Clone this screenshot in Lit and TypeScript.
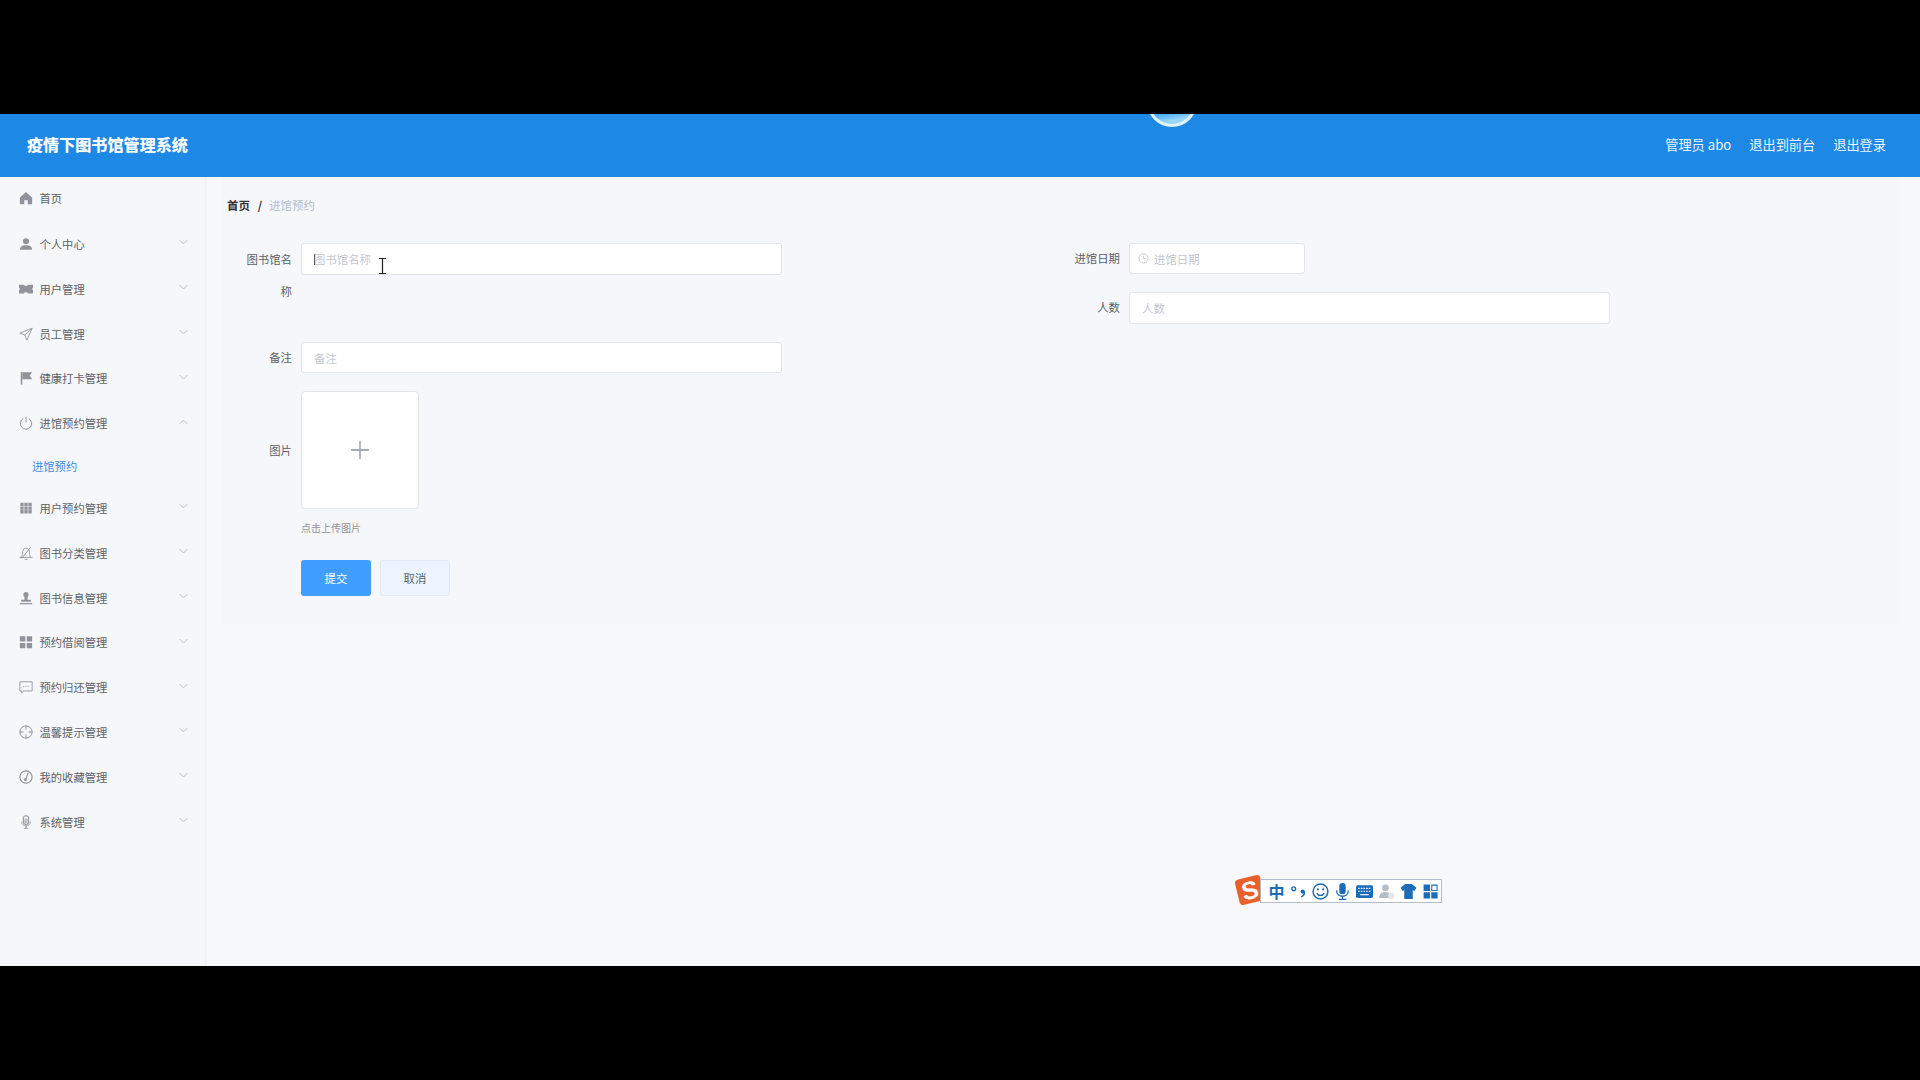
import { LitElement, html, css, svg } from "lit";
import { customElement } from "lit/decorators.js";

const icons: Record<string, unknown> = {
  home: svg`<path d="M8 1 1 7.500V15h5v-4.500h4V15h5V7.500z" fill="currentColor"/>`,
  user: svg`<circle cx="8" cy="4.800" r="3.500" fill="currentColor"/><path d="M1 14.500c0-3.800 2.800-5.200 7-5.200s7 1.400 7 5.200z" fill="currentColor"/>`,
  ticket: svg`<path d="M0 3h5.500l1 1.300h3l1-1.300H16v3.500L14.800 8 16 9.500V13h-5.500l-1-1.300h-3l-1 1.300H0V9.500L1.200 8 0 6.500z" fill="currentColor"/>`,
  send: svg`<path d="M15 1.500 1 7l5.800 2.200L9 15zM6.800 9.200 15 1.500" fill="none" stroke="currentColor" stroke-width="1"/>`,
  flag: svg`<path d="M2 1h1.800v14.500H2z" fill="currentColor"/><path d="M3.800 1.500H15l-2.700 4 2.700 4H3.800z" fill="currentColor"/>`,
  power: svg`<path d="M5 2.800a6.500 6.500 0 1 0 6 0M8 .8v6.500" fill="none" stroke="currentColor" stroke-width="1.100"/>`,
  grid: svg`<path d="M1.500 2h3.800v3.800H1.500zM6.100 2h3.800v3.800H6.100zM10.700 2h3.800v3.800h-3.800zM1.500 6.200h3.800V10H1.500zM6.100 6.200h3.800V10H6.100zM10.700 6.200h3.800V10h-3.800zM1.500 10.400h3.800v3.800H1.500zM6.100 10.400h3.800v3.800H6.100zM10.700 10.400h3.800v3.800h-3.800z" fill="currentColor"/>`,
  belloff: svg`<path d="M.5 13h15M3 13c1-2 1-4 1.300-6.500C4.600 4.100 6.300 2.300 8 2.300s3.400 1.500 3.800 3.700c.4 2.500.2 5 1.200 7M6.500 15.200h3M3 14.500 13.500 1" fill="none" stroke="currentColor" stroke-width="1"/>`,
  stamp: svg`<circle cx="8" cy="4" r="3" fill="currentColor"/><path d="M6.300 6h3.400v4.200H6.300zM2.500 10h11v2.300h-11zM1 13.800h14v1.200H1z" fill="currentColor"/>`,
  menu: svg`<path d="M1 1.500h6.200v6H1zM8.800 1.500H15v6H8.800zM1 9h6.200v6H1zM8.800 9H15v6H8.800z" fill="currentColor"/>`,
  chat: svg`<path d="M1 2h14v10.500H5.500L3 14.800v-2.300H1z" fill="none" stroke="currentColor" stroke-width="1"/><path d="M4.800 7.300h1.200M7.400 7.300h1.200M10 7.300h1.200" stroke="currentColor" stroke-width="1"/>`,
  aim: svg`<circle cx="8" cy="8" r="7" fill="none" stroke="currentColor" stroke-width="1.100"/><path d="M8 .8v4.400M8 10.800v4.400M.8 8h4.400M10.800 8h4.400" stroke="currentColor" stroke-width="1.100"/>`,
  gauge: svg`<circle cx="8" cy="8" r="7" fill="none" stroke="currentColor" stroke-width="1.300"/><path d="m10.500 3-2.800 8" stroke="currentColor" stroke-width="1.300"/><circle cx="7.300" cy="11" r="1.700" fill="currentColor"/>`,
  mic: svg`<rect x="5" y=".8" width="6" height="10" rx="3" fill="none" stroke="currentColor" stroke-width="1.200"/><rect x="6.200" y="4" width="3.600" height="5.500" rx="1.500" fill="currentColor" opacity=".6"/><path d="M3 7.500c0 3.200 2.200 5 5 5s5-1.800 5-5M8 12.500v2.700M5.500 15.300h5" fill="none" stroke="currentColor" stroke-width="1"/>`,
};

const menu = [
  { label: "首页", icon: "home", first: true, plain: true },
  { label: "个人中心", icon: "user" },
  { label: "用户管理", icon: "ticket" },
  { label: "员工管理", icon: "send" },
  { label: "健康打卡管理", icon: "flag" },
  { label: "进馆预约管理", icon: "power", open: true, sub: "进馆预约" },
  { label: "用户预约管理", icon: "grid" },
  { label: "图书分类管理", icon: "belloff" },
  { label: "图书信息管理", icon: "stamp" },
  { label: "预约借阅管理", icon: "menu" },
  { label: "预约归还管理", icon: "chat" },
  { label: "温馨提示管理", icon: "aim" },
  { label: "我的收藏管理", icon: "gauge" },
  { label: "系统管理", icon: "mic" },
];

@customElement("app-root")
export class AppRoot extends LitElement {
  static styles = css`
    :host {
      display: block;
      height: 1080px;
      background: #000;
      font-family: "Noto Sans CJK SC", "Liberation Sans", sans-serif;
      font-size: 11.4px;
      color: #606266;
      overflow: hidden;
    }
    .screen { display: flex; flex-direction: column; box-sizing: border-box; padding-top: 114px; height: 966px; position: relative; }
    .header {
      height: 63px; flex: none; box-sizing: border-box; background: #1e88e5; color: #fff;
      display: flex; align-items: center; justify-content: space-between;
      padding: 0 34px 0 27px; position: relative; overflow: hidden;
    }
    .title { font-size: 16.1px; font-weight: 700; padding-bottom: 4px; text-shadow: 0 0 1px rgba(255,255,255,.5); }
    .links { display: flex; gap: 18px; font-size: 13.2px; color: #eaf4fd; padding-bottom: 2px; }
    .orb {
      position: absolute; left: 1147px; top: -37px; width: 50px; height: 50px;
      box-sizing: border-box; border-radius: 50%; border: 3px solid #dff1fc;
      background: linear-gradient(170deg, #4fb0f5 72%, #9ad6f9 86%);
    }
    .body { flex: 1; display: flex; min-height: 0; background: #f7f8fa; }
    .side { width: 207px; flex: none; background: #f5f7fb; box-shadow: inset -6px 0 5px -5px rgba(0,0,0,.035); font-size: 11.3px; }
    .row { height: 44.8px; display: flex; align-items: center; padding: 0 0 2px 19px; box-sizing: border-box; }
    .row.first { height: 45.6px; padding-bottom: 3px; }
    .ico { width: 14px; height: 14px; color: #909399; flex: none; margin-right: 7px; margin-left: -0.5px; }
    .chev { width: 9px; height: 6px; margin-left: auto; margin-right: 19px; margin-bottom: 3px; color: #b9bdc6; }
    .sub { height: 40px; display: flex; align-items: center; padding: 0 0 2px 32px; box-sizing: border-box; color: #3a8ee6; }
    .main { flex: 1; padding: 0 20px 0 15px; min-width: 0; }
    .card { height: 446px; background: #f6f7fa; }
    .crumb { height: 50px; padding: 5px 0 0 5px; display: flex; align-items: center; color: #b2bdca; box-sizing: border-box; }
    .crumb b { color: #303133; font-weight: 700; }
    .crumb i { color: #303133; font-style: normal; font-weight: 700; margin: 0 7px 0 8px; }
    .form {
      display: grid; grid-template-columns: 828px 828px; grid-template-rows: 31px 32px 31px;
      row-gap: 18px; margin-top: 16px; position: relative;
    }
    .item { display: flex; gap: 9px; align-items: flex-start; }
    .name { grid-row: 1 / span 2; }
    .date { grid-column: 2; grid-row: 1; }
    .count { grid-column: 2; grid-row: 2; }
    .note { grid-column: 1; grid-row: 3; }
    .label { width: 70px; padding-left: 22px; box-sizing: border-box; flex: none; text-align: right; line-height: 31px; color: #606266; }
    .name .label { line-height: 32px; margin-top: -0.5px; }
    .field {
      width: 481px; height: 100%; max-height: 32px; box-sizing: border-box; background: #fff;
      border: 1px solid #e2e4ea; border-radius: 3px; display: flex; align-items: center; padding: 0 12px;
    }
    .name .field { height: 32px; }
    .field.short { width: 176px; padding-left: 8px; gap: 5px; }
    .field input {
      border: 0; outline: 0; padding: 0; background: none; width: 100%; font: inherit; color: #606266;
    }
    .field input::placeholder { color: #c3c6ce; opacity: 1; }
    .clock { width: 11px; height: 11px; flex: none; color: #c3c6ce; }
    .upload-row { display: flex; gap: 9px; margin-top: 18px; align-items: center; }
    .upload {
      width: 118px; height: 118px; box-sizing: border-box; background: #fff; border: 1px solid #e2e4ea;
      border-radius: 4px; display: flex; align-items: center; justify-content: center; color: #8c939d;
    }
    .upload svg { width: 20px; height: 20px; }
    .hint { margin: 11px 0 0 79px; font-size: 10px; line-height: 16px; color: #8f949c; }
    .buttons { display: flex; gap: 9px; margin: 24px 0 0 79px; }
    .btn { width: 70px; height: 36px; box-sizing: border-box; border-radius: 3px; padding-bottom: 1px; display: flex; align-items: center; justify-content: center; }
    .primary { background: #409eff; color: #fff; }
    .ghost { background: #ecf5ff; border: 1px solid #e3e8f0; color: #606266; }
    .caret { position: absolute; left: 92px; top: 11px; width: 1px; height: 11px; background: #606266; }
    .ibeam { position: absolute; left: 156px; top: 15px; width: 9px; height: 16px; color: #222; }
    .ime {
      position: absolute; left: 1260px; top: 879px; width: 182px; height: 24px; box-sizing: border-box;
      background: #fff; border: 1px solid #b4bccc; display: flex; align-items: center;
      padding-left: 7px; gap: 5px; color: #1b6cb8;
    }
    .ime .ch { font-size: 16px; font-weight: 700; width: 17px; text-align: center; line-height: 22px; }
    .ime svg { width: 17px; height: 17px; flex: none; }
    .logo {
      position: absolute; left: 1237px; top: 877px; width: 26px; height: 26px; border-radius: 4px;
      background: #e8602c; color: #fff; font: 700 25px/26px "Liberation Sans", sans-serif; text-align: center;
      transform: rotate(-14deg);
    }
  `;

  private icon(name: string) {
    return html`<svg class="ico" viewBox="0 0 16 16">${icons[name]}</svg>`;
  }

  private row(m: (typeof menu)[number]) {
    return html`
      <div class="row ${m.first ? "first" : ""}">
        ${this.icon(m.icon)}<span>${m.label}</span>
        ${m.plain
          ? ""
          : html`<svg class="chev" viewBox="0 0 9 6"><path d=${m.open ? "M.5 5 4.500 1l4 4" : "M.5 1l4 4 4-4"} fill="none" stroke="currentColor" stroke-width=".9"/></svg>`}
      </div>
      ${m.sub ? html`<div class="sub">${m.sub}</div>` : ""}
    `;
  }

  render() {
    return html`
      <div class="screen">
        <header class="header">
          <div class="orb"></div>
          <div class="title">疫情下图书馆管理系统</div>
          <div class="links"><span>管理员 abo</span><span>退出到前台</span><span>退出登录</span></div>
        </header>
        <div class="body">
          <aside class="side">${menu.map((m) => this.row(m))}</aside>
          <main class="main">
            <div class="card">
              <div class="crumb"><b>首页</b><i>/</i><span>进馆预约</span></div>
              <div class="form">
                <div class="item name">
                  <div class="label">图书馆名称</div>
                  <div class="field"><input placeholder="图书馆名称" /></div>
                  <span class="caret"></span>
                  <svg class="ibeam" viewBox="0 0 9 16"><path d="M1 .5h7M1 15.500h7M4.500 .5v15" fill="none" stroke="currentColor" stroke-width="1.200"/></svg>
                </div>
                <div class="item date">
                  <div class="label">进馆日期</div>
                  <div class="field short">
                    <svg class="clock" viewBox="0 0 12 12"><circle cx="6" cy="6" r="5" fill="none" stroke="currentColor"/><path d="M6 3v3h2.500" fill="none" stroke="currentColor"/></svg>
                    <input placeholder="进馆日期" />
                  </div>
                </div>
                <div class="item count">
                  <div class="label">人数</div>
                  <div class="field"><input placeholder="人数" /></div>
                </div>
                <div class="item note">
                  <div class="label">备注</div>
                  <div class="field"><input placeholder="备注" /></div>
                </div>
              </div>
              <div class="upload-row">
                <div class="label">图片</div>
                <div class="upload"><svg viewBox="0 0 20 20"><path d="M1 10h18M10 1v18" stroke="currentColor" stroke-width="1.300"/></svg></div>
              </div>
              <div class="hint">点击上传图片</div>
              <div class="buttons"><div class="btn primary">提交</div><div class="btn ghost">取消</div></div>
            </div>
          </main>
        </div>
        <div class="logo">S</div>
        <div class="ime">
          <span class="ch">中</span>
          <svg viewBox="0 0 16 16"><circle cx="3.500" cy="5.500" r="1.800" fill="none" stroke="currentColor" stroke-width="1.300"/><circle cx="12" cy="8" r="2" fill="currentColor"/><path d="M13.500 8.500c.3 2-1 3.500-3 4.500" fill="none" stroke="currentColor" stroke-width="1.400"/></svg>
          <svg viewBox="0 0 16 16"><circle cx="8" cy="8" r="7" fill="none" stroke="currentColor" stroke-width="1.400"/><circle cx="5.500" cy="6" r="1" fill="currentColor"/><circle cx="10.500" cy="6" r="1" fill="currentColor"/><path d="M4.500 9.500c1.500 3 5.500 3 7 0" fill="none" stroke="currentColor" stroke-width="1.200"/></svg>
          <svg viewBox="0 0 16 16"><rect x="5" y="0" width="6" height="10.500" rx="3" fill="currentColor"/><path d="M2.500 7c0 3.500 2.500 5.500 5.500 5.500s5.500-2 5.500-5.500M8 12.500v2.500M4.500 15.500h7" fill="none" stroke="currentColor" stroke-width="1.300"/></svg>
          <svg viewBox="0 0 16 16"><rect x="0" y="2" width="16" height="12" rx="1.500" fill="currentColor"/><path d="M2 5h12M2 7.800h12" stroke="#fff" stroke-width="1.100" stroke-dasharray="1.500 1"/><path d="M4 11h8" stroke="#fff" stroke-width="1.100"/></svg>
          <svg viewBox="0 0 16 16"><circle cx="7" cy="4.500" r="3.200" fill="#b5bdc8"/><path d="M1 14c0-4 3-5.500 6-5.500s4 1 4.500 2.500v3z" fill="#b5bdc8"/><circle cx="12.500" cy="12" r="3" fill="#e4e7ec"/></svg>
          <svg viewBox="0 0 16 16"><path d="M5 1h6l4.500 3.500-2 3-1.500-1V15H4V6.500l-1.500 1-2-3z" fill="currentColor"/></svg>
          <svg viewBox="0 0 16 16"><path d="M1.500 1.500h6v6h-6zM1.500 8.700h6v6h-6zM8.700 8.700h6v6h-6z" fill="currentColor"/><path d="M9.200 2h5v5h-5z" fill="#fff" stroke="currentColor"/></svg>
        </div>
      </div>
    `;
  }
}
